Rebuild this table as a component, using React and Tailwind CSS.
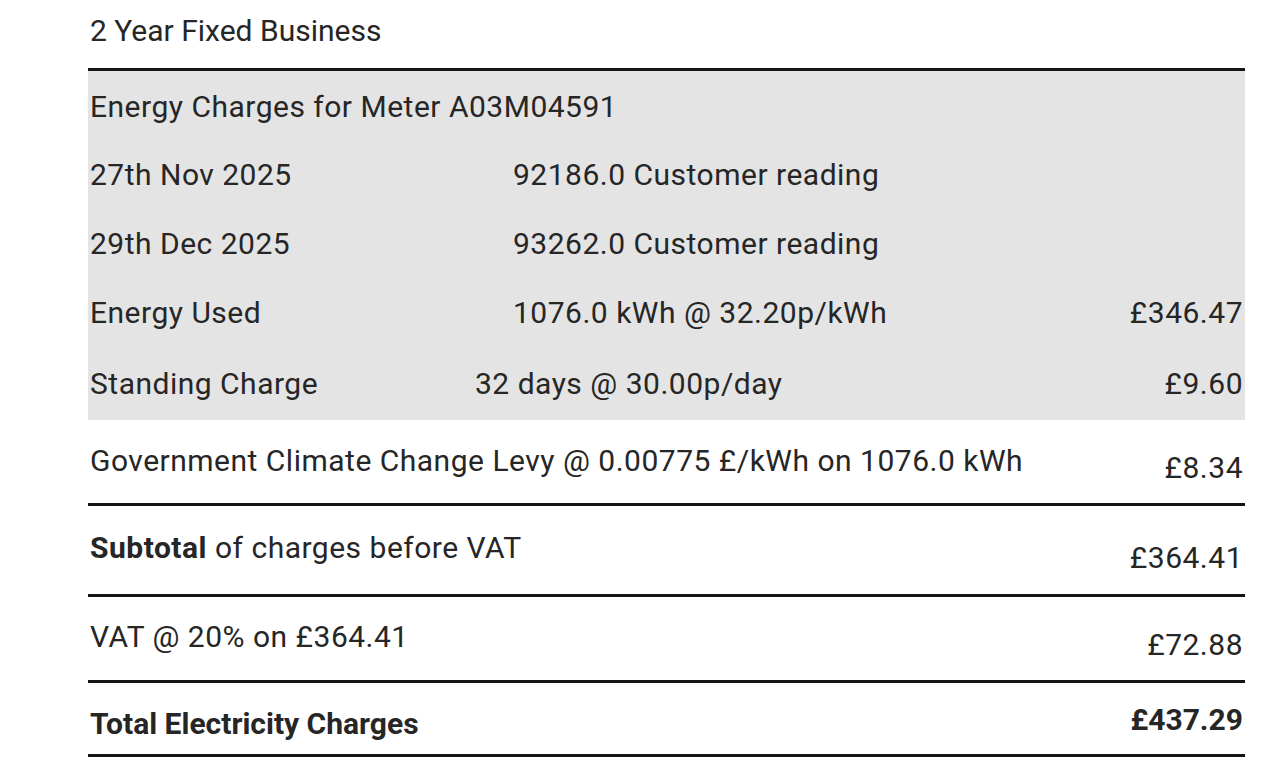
import React from 'react';

const font = { fontFamily: 'Roboto, "Open Sans", sans-serif' };

function GreyRow({ label, middle, middleClass = 'w-[423px]', amount, className = '' }) {
  return (
    <div className={`flex items-center ${className}`}>
      <div className={`${middleClass} shrink-0`}>{label}</div>
      <div className="flex-1">{middle}</div>
      <div className="text-right">{amount}</div>
    </div>
  );
}

export default function App() {
  return (
    <div className="w-[1280px] h-[771px] bg-white overflow-hidden text-[#262626] text-[30px] leading-none tracking-[0.5px]" style={font}>
      <div className="ml-[88px] w-[1157px]">
        <div className="h-[68px] flex items-center pl-[2px] pb-[6px] tracking-[0px]">2 Year Fixed Business</div>
        <div className="h-[3px] bg-[#151515]" />

        <div className="bg-[#e4e4e4] pl-[2px] pr-[2px]">
          <div className="h-[69px] flex items-center pt-[2px]">Energy Charges for Meter A03M04591</div>
          <GreyRow className="h-[69px]" label="27th Nov 2025" middle="92186.0 Customer reading" />
          <GreyRow className="h-[69px]" label="29th Dec 2025" middle="93262.0 Customer reading" />
          <GreyRow className="h-[70px]" label="Energy Used" middle="1076.0 kWh @ 32.20p/kWh" amount="£346.47" />
          <GreyRow className="h-[72px]" middleClass="w-[385px]" label="Standing Charge" middle="32 days @ 30.00p/day" amount="£9.60" />
        </div>

        <div className="h-[83px] flex items-center justify-between pl-[2px] pr-[2px]">
          <span className="-mt-[2px]">Government Climate Change Levy @ 0.00775 £/kWh on 1076.0 kWh</span>
          <span className="mt-[12px]">£8.34</span>
        </div>
        <div className="h-[3px] bg-[#151515]" />

        <div className="h-[88px] flex items-center justify-between pl-[2px] pr-[2px]">
          <span className="-mt-[4px]"><b className="font-bold">Subtotal</b> of charges before VAT</span>
          <span className="mt-[16px]">£364.41</span>
        </div>
        <div className="h-[3px] bg-[#151515]" />

        <div className="h-[83px] flex items-center justify-between pl-[2px] pr-[2px]">
          <span className="-mt-[4px]">VAT @ 20% on £364.41</span>
          <span className="mt-[12px]">£72.88</span>
        </div>
        <div className="h-[3px] bg-[#151515]" />

        <div className="h-[71px] flex items-center justify-between pl-[2px] pr-[2px] font-bold tracking-[0px]">
          <span className="mt-[10px]">Total Electricity Charges</span>
          <span className="mt-[2px]">£437.29</span>
        </div>
        <div className="h-[3px] bg-[#151515]" />
      </div>
    </div>
  );
}
